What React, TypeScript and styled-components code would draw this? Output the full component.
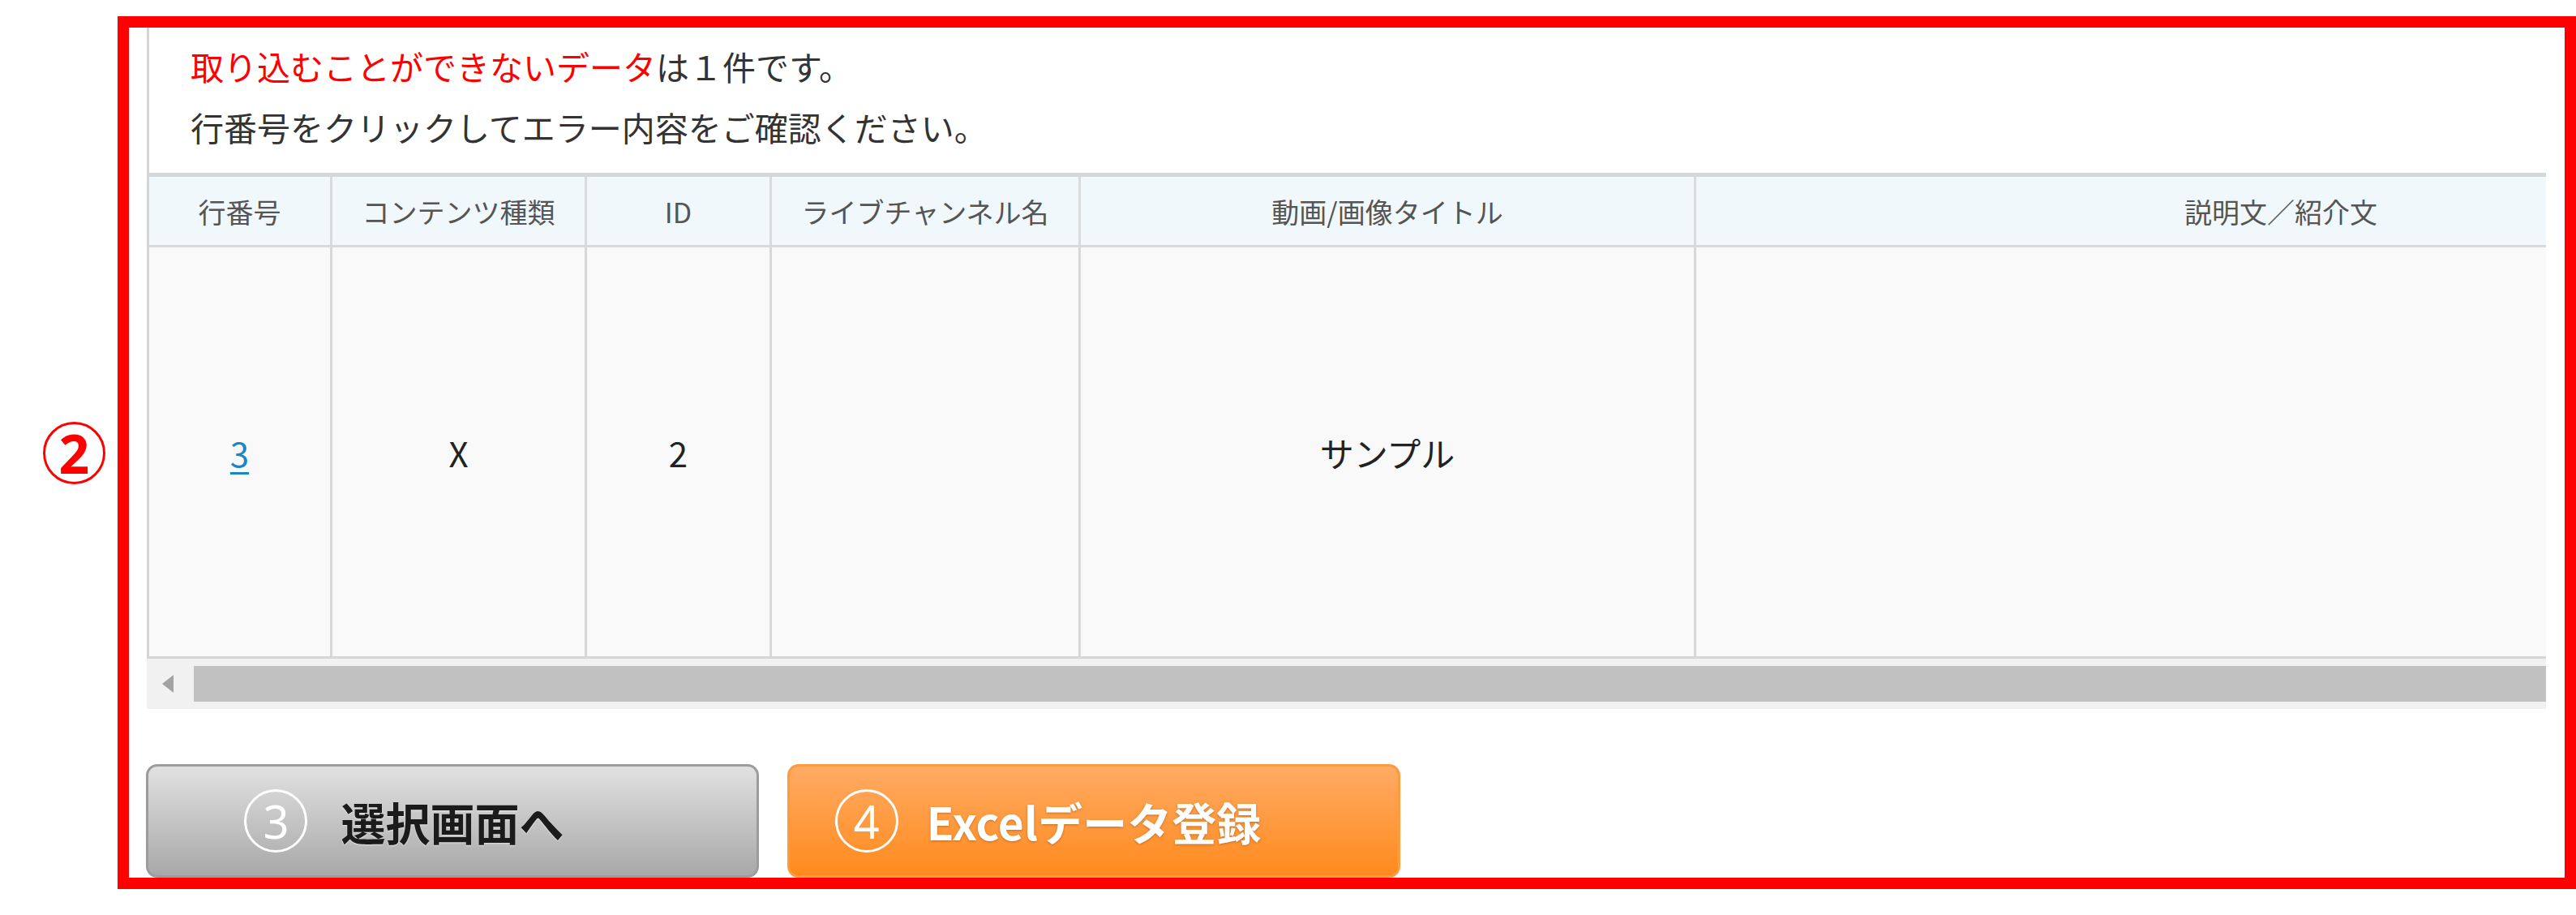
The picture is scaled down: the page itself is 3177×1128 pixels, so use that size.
import React from "react";
import styled, { createGlobalStyle } from "styled-components";

const GlobalStyle = createGlobalStyle`
  html, body {
    margin: 0;
    padding: 0;
    background: #fff;
  }
  body {
    width: 3177px;
    height: 1128px;
    overflow: hidden;
    font-family: "Noto Sans CJK JP", "Noto Sans", sans-serif;
    color: #333;
  }
`;

const Page = styled.div`
  display: flex;
  align-items: center;
  padding-top: 20px;
`;

const MarkerSlot = styled.div`
  width: 145px;
  padding-left: 53px;
  box-sizing: border-box;
  flex-shrink: 0;
`;

// circled number drawn with a ring and a digit
const Circled = styled.span<{ $color: string; $size: number; $font: number; $bold?: boolean }>`
  display: flex;
  align-items: center;
  justify-content: center;
  width: ${(p) => p.$size}px;
  height: ${(p) => p.$size}px;
  box-sizing: border-box;
  border: 3px solid ${(p) => p.$color};
  border-radius: 50%;
  color: ${(p) => p.$color};
  font-family: "Noto Sans", "Liberation Sans", sans-serif;
  font-size: ${(p) => p.$font}px;
  font-weight: ${(p) => (p.$bold ? 700 : 400)};
  line-height: 1;
`;

const Frame = styled.div`
  width: 3032px;
  height: 1076px;
  box-sizing: border-box;
  border: 14px solid #ff0000;
  padding: 0 23px 0 22px;
  display: flex;
  flex-direction: column;
`;

const Bordered = styled.div`
  border-left: 3px solid #d5d5d5;
  background: #fff;
`;

const Message = styled.div`
  padding: 10px 0 19px 51px;
  font-size: 41px;
  line-height: 75px;
  color: #333;
`;

const Alert = styled.span`
  color: #ff0000;
`;

const Viewport = styled.div`
  overflow: hidden;
`;

const COLUMNS = "226px 314px 228px 381px 759px 1445px";

const HeadRow = styled.div`
  display: grid;
  grid-template-columns: ${COLUMNS};
  width: max-content;
  border-top: 5px solid #d3d8d9;
  border-bottom: 3px solid #d6dadb;
`;

const HeadCell = styled.div`
  height: 84px;
  box-sizing: border-box;
  display: flex;
  align-items: center;
  justify-content: center;
  background: #f1f8fb;
  border-right: 3px solid #d8dcdd;
  font-size: 34px;
  color: #555;
  white-space: nowrap;
`;

const BodyRow = styled.div`
  display: grid;
  grid-template-columns: ${COLUMNS};
  width: max-content;
  border-bottom: 3px solid #d6d6d6;
`;

const BodyCell = styled.div`
  height: 504px;
  box-sizing: border-box;
  display: flex;
  align-items: center;
  justify-content: center;
  background: #f9f9f9;
  border-right: 3px solid #d8d8d8;
  font-size: 42px;
  color: #222;
`;

const RowLink = styled.a`
  color: #1d84c6;
  text-decoration: underline;
  text-underline-offset: 6px;
  text-decoration-thickness: 3px;
`;

const ScrollBar = styled.div`
  height: 62px;
  display: flex;
  align-items: center;
  padding-left: 19px;
  background: #f1f1f1;
`;

const ArrowLeft = styled.span`
  width: 0;
  height: 0;
  border-top: 11px solid transparent;
  border-bottom: 11px solid transparent;
  border-right: 14px solid #a3a3a3;
`;

const Thumb = styled.div`
  flex: 1;
  height: 44px;
  margin-left: 25px;
  background: #c1c1c1;
`;

const Actions = styled.div`
  display: flex;
  gap: 35px;
  margin-top: 68px;
  margin-left: -1px;
`;

const ActionButton = styled.button<{ $variant: "gray" | "orange" }>`
  width: 756px;
  height: 140px;
  box-sizing: border-box;
  display: flex;
  align-items: center;
  justify-content: center;
  border-radius: 14px;
  border: 3px solid ${(p) => (p.$variant === "gray" ? "#9c9c9c" : "#ff9a3e")};
  background: ${(p) =>
    p.$variant === "gray"
      ? "linear-gradient(#e1e1e1, #a8a8a8)"
      : "linear-gradient(#ffab63, #ff8a1e)"};
  color: ${(p) => (p.$variant === "gray" ? "#1b1b1b" : "#fff")};
  text-shadow: ${(p) =>
    p.$variant === "gray"
      ? "0 1px 2px rgba(255, 255, 255, 0.6)"
      : "0 1px 3px rgba(120, 60, 0, 0.45)"};
  font-family: "Noto Sans CJK JP", "Noto Sans", sans-serif;
  font-size: 55px;
  font-weight: 700;
  padding: 0;
  cursor: pointer;
`;

const Label = styled.span`
  position: relative;
  line-height: 1;
`;

// annotation number sitting to the left of the label
const LabelMarker = styled.span<{ $gap: number }>`
  position: absolute;
  top: 50%;
  right: calc(100% + ${(p) => p.$gap}px);
  transform: translateY(-50%);
  text-shadow: none;
`;

const headers = ["行番号", "コンテンツ種類", "ID", "ライブチャンネル名", "動画/画像タイトル", "説明文／紹介文"];

export default function App() {
  return (
    <>
      <GlobalStyle />
      <Page>
        <MarkerSlot>
          <Circled $color="#ff0000" $size={77} $font={66} $bold>
            2
          </Circled>
        </MarkerSlot>
        <Frame>
          <Bordered>
            <Message>
              <div>
                <Alert>取り込むことができないデータ</Alert>は１件です。
              </div>
              <div>行番号をクリックしてエラー内容をご確認ください。</div>
            </Message>
            <Viewport>
              <HeadRow>
                {headers.map((h) => (
                  <HeadCell key={h}>{h}</HeadCell>
                ))}
              </HeadRow>
              <BodyRow>
                <BodyCell>
                  <RowLink href="#">3</RowLink>
                </BodyCell>
                <BodyCell>X</BodyCell>
                <BodyCell>2</BodyCell>
                <BodyCell />
                <BodyCell>サンプル</BodyCell>
                <BodyCell />
              </BodyRow>
            </Viewport>
          </Bordered>
          <ScrollBar>
            <ArrowLeft />
            <Thumb />
          </ScrollBar>
          <Actions>
            <ActionButton $variant="gray">
              <Label>
                <LabelMarker $gap={41}>
                  <Circled $color="#fff" $size={78} $font={56}>
                    3
                  </Circled>
                </LabelMarker>
                選択画面へ
              </Label>
            </ActionButton>
            <ActionButton $variant="orange">
              <Label>
                <LabelMarker $gap={35}>
                  <Circled $color="#fff" $size={78} $font={56}>
                    4
                  </Circled>
                </LabelMarker>
                Excelデータ登録
              </Label>
            </ActionButton>
          </Actions>
        </Frame>
      </Page>
    </>
  );
}
